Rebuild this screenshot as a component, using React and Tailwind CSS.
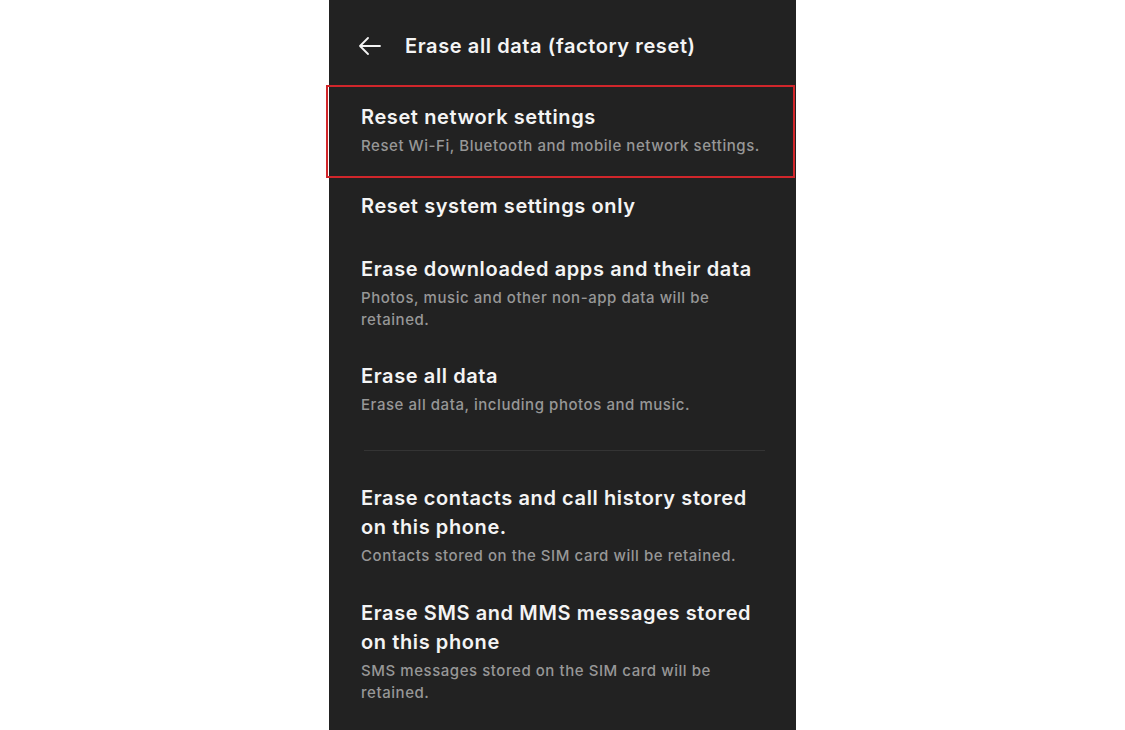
import { useState } from 'react';

const items = [
  {
    id: 'network',
    title: 'Reset network settings',
    desc: 'Reset Wi-Fi, Bluetooth and mobile network settings.',
  },
  { id: 'system', title: 'Reset system settings only', gap: 'mt-[14px]' },
  {
    id: 'apps',
    title: 'Erase downloaded apps and their data',
    desc: 'Photos, music and other non-app data will be retained.',
    gap: 'mt-[34px]',
  },
  {
    id: 'all',
    title: 'Erase all data',
    desc: 'Erase all data, including photos and music.',
    gap: 'mt-[31px]',
  },
];

const phoneItems = [
  {
    id: 'contacts',
    title: 'Erase contacts and call history stored on this phone.',
    desc: 'Contacts stored on the SIM card will be retained.',
    gap: 'mt-[33px]',
  },
  {
    id: 'sms',
    title: 'Erase SMS and MMS messages stored on this phone',
    desc: 'SMS messages stored on the SIM card will be retained.',
    gap: 'mt-[32px]',
  },
];

function ResetItem({ title, desc, gap = '' }) {
  return (
    <div className={`${gap} pl-[32px] pr-[32px]`}>
      <div className="text-[20px] leading-[29px] font-semibold tracking-[0.6px] text-[#f4f4f4]">{title}</div>
      {desc && (
        <div className="mt-[3px] text-[15px] leading-[22px] font-medium tracking-[0.55px] text-[#979797]">{desc}</div>
      )}
    </div>
  );
}

export default function App() {
  const [selected] = useState('network');

  return (
    <div
      className="w-full h-[730px] bg-white flex justify-center overflow-hidden"
      style={{ fontFamily: 'Inter, "Noto Sans", sans-serif' }}
    >
      <div className="w-[467px] h-full bg-[#222222] flex flex-col">
        {/* Header */}
        <div className="h-[85px] shrink-0 flex items-start pt-[32px] pl-[29px]">
          <svg width="23" height="18" viewBox="0 0 23 18" fill="none" className="mt-[5px]">
            <path d="M22 9H2M10 1L2 9l8 8" stroke="#f4f4f4" strokeWidth="1.8" strokeLinecap="round" strokeLinejoin="round" />
          </svg>
          <div className="ml-[24px] text-[20px] leading-[29px] font-semibold tracking-[0.6px] text-[#f4f4f4]">
            Erase all data (factory reset)
          </div>
        </div>

        {/* Options */}
        {items.map((item) =>
          item.id === selected ? (
            <div
              key={item.id}
              className="ml-[-3px] mr-[1px] h-[93px] border-2 border-[#d1262b] pt-[16px] pl-[1px]"
            >
              <ResetItem title={item.title} desc={item.desc} />
            </div>
          ) : (
            <ResetItem key={item.id} {...item} />
          )
        )}

        <div className="mt-[34px] ml-[35px] mr-[31px] h-px bg-[#343434]" />

        {phoneItems.map((item) => (
          <ResetItem key={item.id} {...item} />
        ))}
      </div>
    </div>
  );
}
